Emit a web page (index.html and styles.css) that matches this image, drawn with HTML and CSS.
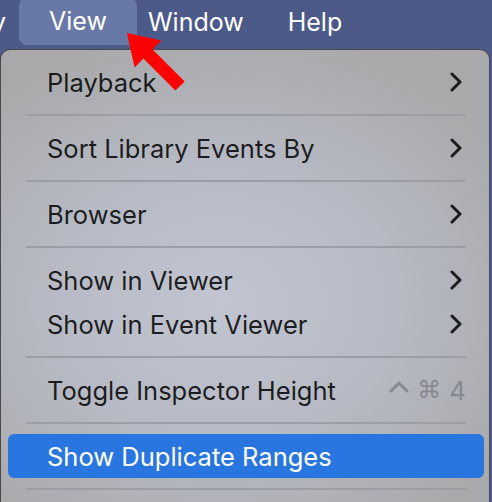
FILE: index.html
```html
<!DOCTYPE html>
<html lang="en">
<head>
    <meta charset="UTF-8">
    <title>View Menu</title>
    <link rel="stylesheet" href="styles.css">
</head>
<body>
    <header class="menubar">
        <span class="menu-title cut">y</span>
        <span class="menu-title active">View</span>
        <span class="menu-title">Window</span>
        <span class="menu-title">Help</span>
    </header>

    <div class="menu">
        <div class="item">Playback <svg class="chev" viewBox="0 0 14 20"><path d="M3 2 L11 10 L3 18"/></svg></div>
        <div class="sep"></div>
        <div class="item">Sort Library Events By <svg class="chev" viewBox="0 0 14 20"><path d="M3 2 L11 10 L3 18"/></svg></div>
        <div class="sep"></div>
        <div class="item">Browser <svg class="chev" viewBox="0 0 14 20"><path d="M3 2 L11 10 L3 18"/></svg></div>
        <div class="sep"></div>
        <div class="item">Show in Viewer <svg class="chev" viewBox="0 0 14 20"><path d="M3 2 L11 10 L3 18"/></svg></div>
        <div class="item">Show in Event Viewer <svg class="chev" viewBox="0 0 14 20"><path d="M3 2 L11 10 L3 18"/></svg></div>
        <div class="sep"></div>
        <div class="item">Toggle Inspector Height
            <span class="shortcut">
                <svg class="caret" viewBox="0 0 20 12"><path d="M2 10 L10 2 L18 10"/></svg>
                <span class="cmd">&#8984;</span>
                <span>4</span>
            </span>
        </div>
        <div class="sep"></div>
        <div class="item selected">Show Duplicate Ranges</div>
        <div class="sep"></div>
    </div>

    <!-- annotation arrow pointing at the View menu -->
    <svg class="arrow" viewBox="0 0 492 502">
        <polygon points="127,33 161.4,40.6 152.6,49.4 184.6,81.4 175.4,90.6 143.4,58.6 134.6,67.4"/>
    </svg>
</body>
</html>
```

FILE: styles.css
```css
body {
    margin: 0;
    width: 492px;
    height: 502px;
    overflow: hidden;
    position: relative;
    background-color: #4b5a89;
    font-family: Inter, "Liberation Sans", sans-serif;
}
.menubar {
    display: flex;
    align-items: flex-start;
    height: 48px;
    background-color: #4b5a89;
    color: white;
    font-size: 25px;
}
.menu-title {
    line-height: 45px;
    padding: 0 22px;
}
.menu-title.cut {
    padding: 0;
    margin-left: -8px;
    margin-right: 13px;
}
.menu-title.active {
    padding: 0 30px;
    margin-right: -11px;
    margin-top: -2px;
    line-height: 47px;
    background-color: #6878a7;
    border-radius: 8px;
}
.menu {
    margin-top: 1px;
    width: 490px;
    height: 460px;
    padding-top: 10px;
    box-sizing: border-box;
    border: 1px solid rgba(30, 30, 40, 0.7);
    border-bottom: none;
    border-radius: 10px 10px 0 0;
    background: radial-gradient(ellipse 70% 60% at 45% 55%, #c1c5d1 0%, #b7bac4 50%, #a9a9ab 100%);
    color: rgba(0, 0, 0, 0.86);
    font-size: 25.5px;
}
.item {
    display: flex;
    align-items: center;
    justify-content: space-between;
    height: 44px;
    margin: 0 5px 0 7px;
    padding: 0 21px 0 39px;
    border-radius: 6px;
}
.item.selected {
    background-color: #2a76e0;
    color: white;
}
.chev {
    width: 14px;
    height: 20px;
    fill: none;
    stroke: #1c1c1c;
    stroke-width: 3;
    stroke-linecap: round;
    stroke-linejoin: round;
}
.shortcut {
    display: flex;
    align-items: center;
    gap: 8px;
    margin-right: -3px;
    color: #868991;
    font-size: 26px;
}
.caret {
    width: 20px;
    height: 12px;
    margin-bottom: 6px;
    fill: none;
    stroke: #868991;
    stroke-width: 3;
    stroke-linecap: round;
    stroke-linejoin: round;
}
.cmd {
    font-family: "DejaVu Sans", sans-serif;
    font-size: 24px;
}
.sep {
    height: 22px;
    display: flex;
    align-items: center;
    margin: 0 23px 0 25px;
}
.sep::before {
    content: "";
    flex: 1;
    height: 2px;
    background-color: #9c9ea6;
}
.arrow {
    position: absolute;
    left: 0;
    top: 0;
    width: 492px;
    height: 502px;
    pointer-events: none;
    fill: #fe0000;
}
```
